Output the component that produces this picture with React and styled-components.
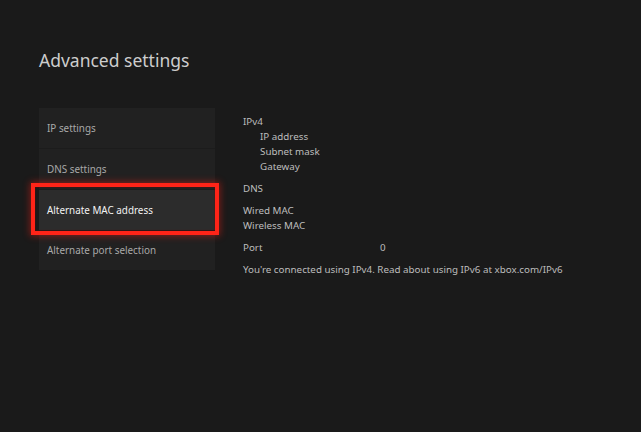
import styled, { createGlobalStyle } from "styled-components";

const GlobalStyle = createGlobalStyle`
    html, body {
        margin: 0;
        padding: 0;
        background: #1a1a1a;
    }
    body {
        font-family: "Noto Sans", "Open Sans", sans-serif;
    }
`;

const Page = styled.div`
    width: 641px;
    height: 432px;
    background: #1a1a1a;
    padding: 46px 0 0 39px;
    box-sizing: border-box;
    overflow: hidden;
`;

const Title = styled.h1`
    margin: 0;
    font-size: 17.5px;
    font-weight: 400;
    color: #cdcdcd;
    line-height: 28px;
`;

const Body = styled.div`
    display: flex;
    align-items: flex-start;
    gap: 28px;
    margin-top: 34px;
`;

const Menu = styled.div`
    width: 176px;
    display: flex;
    flex-direction: column;
    background: #212121;
`;

const MenuItem = styled.div`
    position: relative;
    height: ${p => (p.$last ? "39px" : "41px")};
    display: flex;
    align-items: center;
    padding-left: 8px;
    font-size: 9.9px;
    color: ${p => (p.$active ? "#f2f2f2" : "#a9a9a9")};
    background: ${p => (p.$active ? "#2c2c2c" : "transparent")};
    border-bottom: 1px solid ${p => (p.$last ? "transparent" : "#1c1c1c")};
    box-sizing: border-box;

    ${p =>
        p.$active &&
        `
        &::after {
            content: "";
            position: absolute;
            left: -8px;
            right: -4px;
            top: -7px;
            bottom: -5px;
            border: 4px solid #ff2418;
            box-shadow: 0 0 7px 1px rgba(255, 30, 20, 0.45), inset 0 0 2px rgba(120, 0, 0, 0.8);
        }
    `}
`;

const Details = styled.div`
    padding-top: 6px;
    display: flex;
    flex-direction: column;
    gap: 7px;
    font-size: 9.8px;
    color: #bdbdbd;
`;

const Group = styled.div`
    display: flex;
    flex-direction: column;
`;

const Line = styled.div`
    line-height: 15px;
    padding-left: ${p => (p.$indent ? "17px" : "0")};
    display: flex;
`;

const Label = styled.span`
    width: 137px;
`;

const menuItems = [
    "IP settings",
    "DNS settings",
    "Alternate MAC address",
    "Alternate port selection",
];

export default function App() {
    return (
        <Page>
            <GlobalStyle />
            <Title>Advanced settings</Title>
            <Body>
                <Menu>
                    {menuItems.map((item, i) => (
                        <MenuItem
                            key={item}
                            $active={i === 2}
                            $last={i === menuItems.length - 1}
                        >
                            {item}
                        </MenuItem>
                    ))}
                </Menu>
                <Details>
                    <Group>
                        <Line>IPv4</Line>
                        <Line $indent>IP address</Line>
                        <Line $indent>Subnet mask</Line>
                        <Line $indent>Gateway</Line>
                    </Group>
                    <Group>
                        <Line>DNS</Line>
                    </Group>
                    <Group>
                        <Line>Wired MAC</Line>
                        <Line>Wireless MAC</Line>
                    </Group>
                    <Group>
                        <Line>
                            <Label>Port</Label>
                            <span>0</span>
                        </Line>
                    </Group>
                    <Group>
                        <Line>
                            You're connected using IPv4. Read about using IPv6 at xbox.com/IPv6
                        </Line>
                    </Group>
                </Details>
            </Body>
        </Page>
    );
}
